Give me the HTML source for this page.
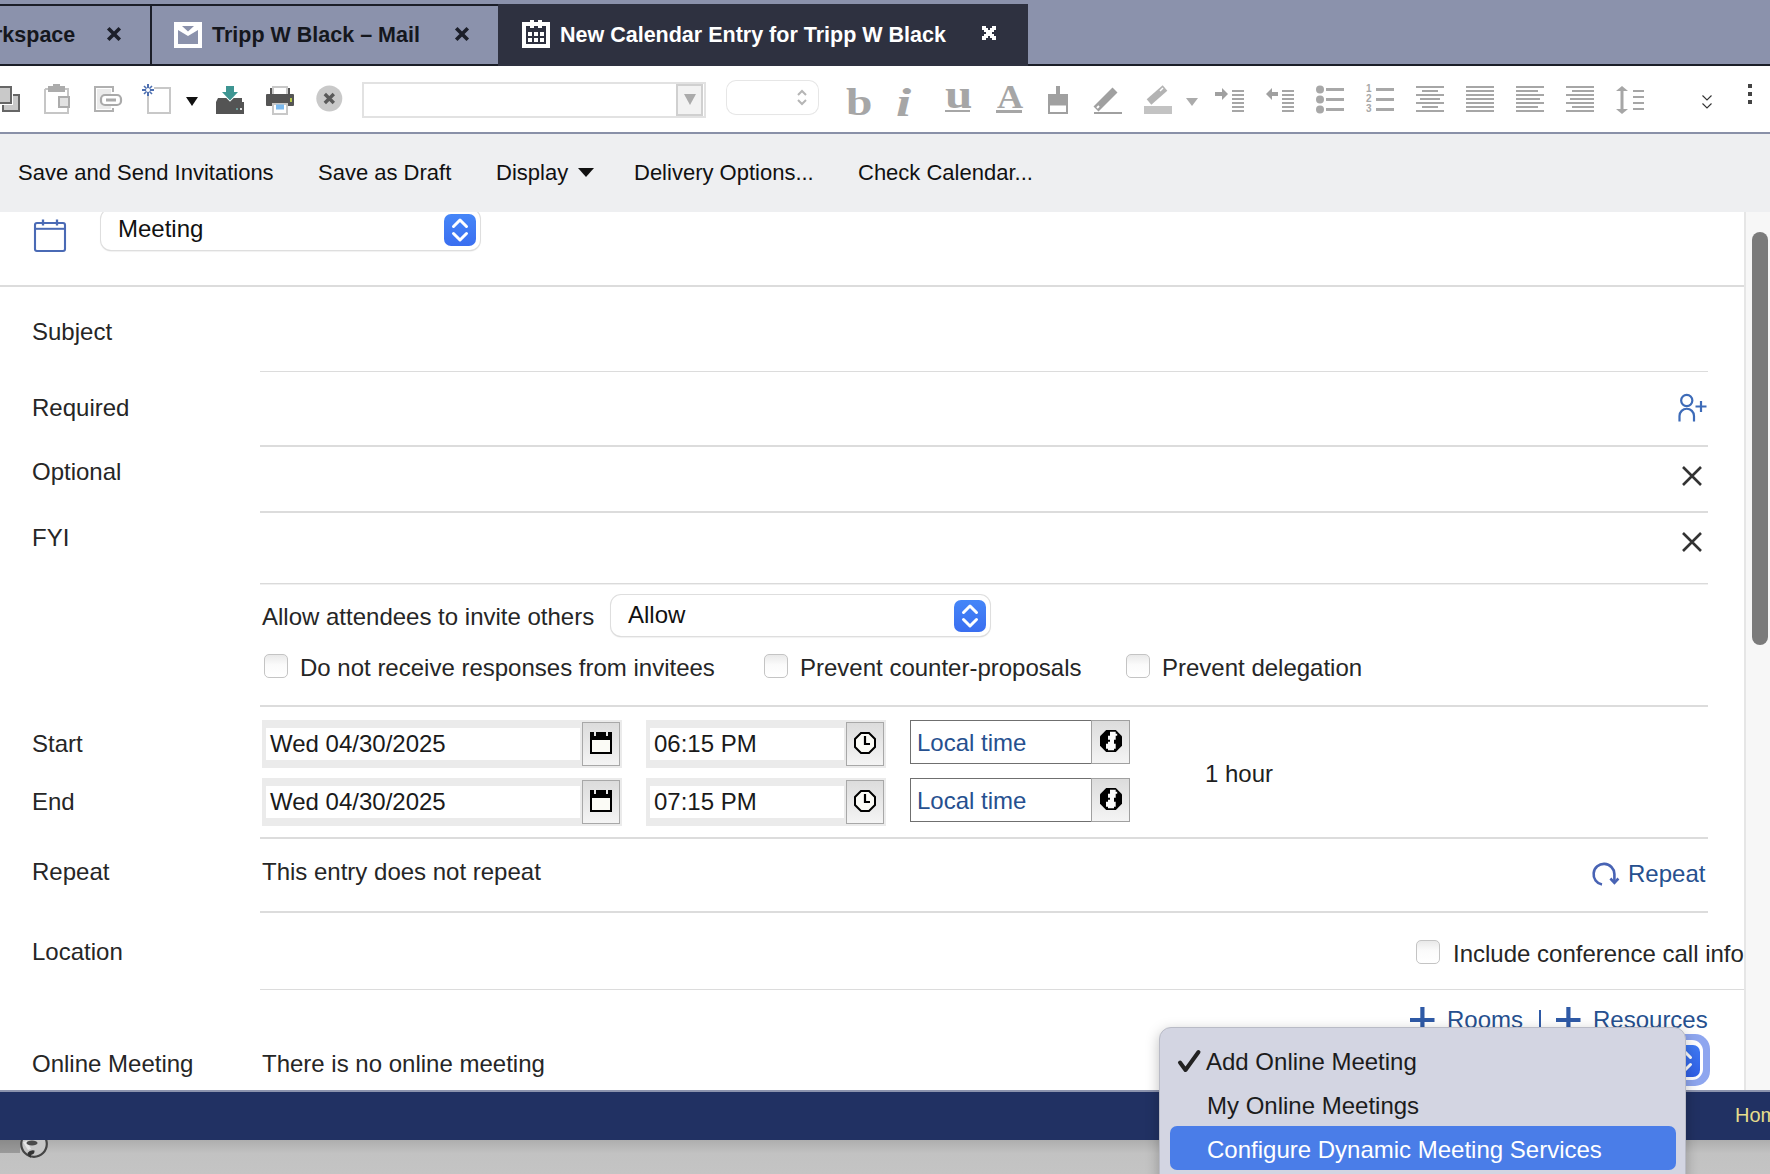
<!DOCTYPE html>
<html><head><meta charset="utf-8">
<style>
*{margin:0;padding:0;box-sizing:border-box}
html,body{width:1770px;height:1174px;overflow:hidden;background:#fff;font-family:"Liberation Sans",sans-serif;color:#222}
.a{position:absolute}
.t{position:absolute;white-space:nowrap;line-height:1}
svg.a{overflow:visible}

</style></head><body>
<div class="a" style="left:0px;top:0px;width:1770px;height:66px;background:#8b92ac"></div>
<div class="a" style="left:0px;top:4px;width:498px;height:2px;background:#1b1e28"></div>
<div class="a" style="left:0px;top:64px;width:1770px;height:2px;background:#1b1e28"></div>
<div class="a" style="left:150px;top:4px;width:2px;height:62px;background:#1b1e28"></div>
<div class="t" style="left:-6px;top:24.50px;font-size:21.5px;color:#15171d;font-weight:bold;">rkspace</div>
<div class="t" style="left:212px;top:24.50px;font-size:21.5px;color:#15171d;font-weight:bold;">Tripp W Black – Mail</div>
<div class="a" style="left:498px;top:4px;width:530px;height:62px;background:#2e3140"></div>
<div class="t" style="left:560px;top:24.50px;font-size:21.5px;color:#ffffff;font-weight:bold;">New Calendar Entry for Tripp W Black</div>
<div class="a" style="left:0px;top:66px;width:1770px;height:66px;background:#fff"></div>
<div class="a" style="left:0px;top:132px;width:1770px;height:2px;background:#8990a8"></div>
<svg class="a" style="left:108px;top:28px;" width="12" height="12" viewBox="0 0 12 12"><path d="M1.5 1.5 L10.5 10.5 M10.5 1.5 L1.5 10.5" stroke="#1c1f2a" stroke-width="3.6" stroke-linecap="square"/></svg>
<svg class="a" style="left:456px;top:28px;" width="12" height="12" viewBox="0 0 12 12"><path d="M1.5 1.5 L10.5 10.5 M10.5 1.5 L1.5 10.5" stroke="#1c1f2a" stroke-width="3.6" stroke-linecap="square"/></svg>
<svg class="a" style="left:982px;top:26px;" width="14" height="14" viewBox="0 0 14 14"><rect x="0" y="0" width="4" height="2" fill="#fff"/><rect x="10" y="0" width="4" height="2" fill="#fff"/><rect x="0" y="2" width="6" height="2" fill="#fff"/><rect x="8" y="2" width="6" height="2" fill="#fff"/><rect x="2" y="4" width="10" height="2" fill="#fff"/><rect x="4" y="6" width="6" height="2" fill="#fff"/><rect x="2" y="8" width="10" height="2" fill="#fff"/><rect x="0" y="10" width="6" height="2" fill="#fff"/><rect x="8" y="10" width="6" height="2" fill="#fff"/><rect x="0" y="12" width="4" height="2" fill="#fff"/><rect x="10" y="12" width="4" height="2" fill="#fff"/></svg>
<svg class="a" style="left:174px;top:22px;" width="28" height="26" viewBox="0 0 28 26"><rect x="0" y="0" width="28" height="26" fill="#fff"/><rect x="4" y="4" width="20" height="18" fill="#8b92ac"/><polygon points="4,4 8,4 14,9.5 20,4 24,4 24,8 14,14 4,8" fill="#fff"/></svg>
<svg class="a" style="left:522px;top:20px;" width="28" height="28" viewBox="0 0 28 28"><rect x="0" y="2" width="28" height="26" fill="#fff"/><rect x="4" y="6" width="20" height="18" fill="#2e3140"/><rect x="8" y="0" width="4" height="8" fill="#fff"/><rect x="16" y="0" width="4" height="8" fill="#fff"/><rect x="6" y="12" width="4" height="4" fill="#fff"/><rect x="6" y="18" width="4" height="4" fill="#fff"/><rect x="12" y="12" width="4" height="4" fill="#fff"/><rect x="12" y="18" width="4" height="4" fill="#fff"/><rect x="18" y="12" width="4" height="4" fill="#fff"/><rect x="18" y="18" width="4" height="4" fill="#fff"/></svg>
<svg class="a" style="left:-8px;top:86px;" width="30" height="28" viewBox="0 0 30 28"><rect x="11" y="9" width="16" height="16" fill="#c9c9c9" stroke="#666" stroke-width="2"/><rect x="1" y="1" width="18" height="16" fill="#fff" stroke="#fff" stroke-width="4"/><rect x="1" y="1" width="18" height="16" fill="#c9c9c9" stroke="#666" stroke-width="2"/></svg>
<svg class="a" style="left:44px;top:84px;" width="28" height="30" viewBox="0 0 28 30"><path d="M1 5 V29 H24 V24 M24 12 V5 H21 M1 5 H4" fill="none" stroke="#c6c6c6" stroke-width="2"/><rect x="4" y="2" width="17" height="6" fill="#acacac"/><rect x="9" y="0" width="7" height="3" fill="#acacac"/><rect x="15" y="13" width="10" height="10" fill="#e2e2e2" stroke="#acacac" stroke-width="2"/></svg>
<svg class="a" style="left:94px;top:86px;" width="30" height="28" viewBox="0 0 30 28"><path d="M19 6 V1 H1 V25 H19 V22" fill="none" stroke="#b0b0b0" stroke-width="2"/><rect x="3" y="3" width="14" height="20" fill="#ebebeb"/><rect x="7" y="9" width="20" height="10" rx="4" fill="#fff" stroke="#aaa" stroke-width="2.2"/><rect x="12" y="12.5" width="10" height="3" fill="#aaa"/></svg>
<svg class="a" style="left:140px;top:83px;" width="34" height="32" viewBox="0 0 34 32"><path d="M8 12 V30 H30 V5 H14" fill="none" stroke="#c8c8c8" stroke-width="2"/><g stroke="#4d6fb0" stroke-width="2"><path d="M8 1 V13 M2 7 H14"/><path d="M4 3 L12 11 M12 3 L4 11" stroke-width="1.6"/></g><circle cx="8" cy="7" r="2" fill="#fff"/></svg>
<svg class="a" style="left:186px;top:97px;" width="12" height="9" viewBox="0 0 12 9"><polygon points="0,0 12,0 6,9" fill="#111"/></svg>
<svg class="a" style="left:216px;top:86px;" width="28" height="28" viewBox="0 0 28 28"><rect x="10" y="0" width="8" height="7" fill="#3e9592"/><polygon points="6,6 22,6 14,14.5" fill="#3e9592"/><path d="M2 12 H10 L14 16 L18 12 H26 V28 H0 V16 Z" fill="#545454"/><path d="M0 16 H2 V12 H10 L14 16 L18 12 H26 V16 H28 V28 H0 Z" fill="#545454"/><rect x="20" y="22" width="2" height="2" fill="#6a9a96"/><rect x="24" y="22" width="2" height="2" fill="#ddd"/></svg>
<svg class="a" style="left:266px;top:86px;" width="28" height="28" viewBox="0 0 28 28"><rect x="7" y="1" width="14" height="10" fill="#fff" stroke="#c8c8c8" stroke-width="2"/><rect x="4" y="2" width="2" height="8" fill="#545454"/><rect x="22" y="2" width="2" height="8" fill="#545454"/><rect x="0" y="8" width="28" height="12" rx="1" fill="#545454"/><rect x="24" y="12" width="2" height="4" fill="#b5c64a"/><rect x="7" y="18" width="14" height="10" fill="#fff" stroke="#c8c8c8" stroke-width="2"/><rect x="10" y="18.5" width="8" height="5" fill="#7bbaf0"/></svg>
<svg class="a" style="left:316px;top:85px;" width="27" height="27" viewBox="0 0 27 27"><circle cx="13.3" cy="13.5" r="13" fill="#c9c9c9"/><path d="M8.8 9 L17.8 18 M17.8 9 L8.8 18" stroke="#5a5a5a" stroke-width="3.4"/></svg>
<div class="a" style="left:362px;top:82px;width:344px;height:36px;background:#fff;border:2px solid #e2e2e2"></div>
<div class="a" style="left:676px;top:84px;width:27px;height:32px;background:#f2f2f2;border:2px solid #d0d0d0;border-top-width:2px"></div>
<svg class="a" style="left:684px;top:94px;" width="12" height="11" viewBox="0 0 12 11"><polygon points="0,0 12,0 6,11" fill="#ababab"/></svg>
<div class="a" style="left:727px;top:81px;width:91px;height:33px;background:#fff;border-radius:9px;box-shadow:0 0 0 1px #e6e6e6,0 1px 1px rgba(0,0,0,.06)"></div>
<svg class="a" style="left:796px;top:89px;" width="12" height="17" viewBox="0 0 12 17"><path d="M2 6 L6 2 L10 6 M2 11 L6 15 L10 11" fill="none" stroke="#b5b5b5" stroke-width="2"/></svg>
<div class="t" style="left:846px;top:83px;font:bold 38px 'Liberation Serif';line-height:1;color:#a6a6a6;transform:scaleX(1.25);transform-origin:0 0">b</div>
<div class="t" style="left:896px;top:83px;font:bold italic 39px 'Liberation Serif';line-height:1;color:#a6a6a6;transform:scaleX(1.4);transform-origin:0 0">i</div>
<div class="t" style="left:945px;top:72.5px;font:bold 42px 'Liberation Serif';line-height:1;color:#a6a6a6;transform:scaleX(1.17);transform-origin:0 0">u</div>
<div class="a" style="left:945px;top:110px;width:25px;height:2px;background:#a6a6a6"></div>
<div class="t" style="left:996.5px;top:81.4px;font:bold 33px 'Liberation Serif';line-height:1;color:#a6a6a6;transform:scaleX(1.1);transform-origin:0 0">A</div>
<div class="a" style="left:996px;top:110px;width:26px;height:3px;background:#a6a6a6"></div>
<svg class="a" style="left:1048px;top:86px;" width="20" height="28" viewBox="0 0 20 28"><rect x="8" y="0" width="4" height="9" fill="#a0a0a0"/><rect x="0" y="8" width="20" height="20" fill="#a0a0a0"/><rect x="2" y="19.5" width="16" height="6.5" fill="#fff"/></svg>
<svg class="a" style="left:1093px;top:86px;" width="30" height="28" viewBox="0 0 30 28"><path d="M3 23 L22 4" stroke="#a0a0a0" stroke-width="7"/><path d="M4 22 L6 20" stroke="#fff" stroke-width="2"/><rect x="1" y="26" width="28" height="2" fill="#a0a0a0"/></svg>
<svg class="a" style="left:1144px;top:86px;" width="30" height="28" viewBox="0 0 30 28"><path d="M5 16 L21 2" stroke="#b3b3b3" stroke-width="7"/><path d="M16 5 L19 2" stroke="#fff" stroke-width="1.5"/><rect x="0" y="20" width="28" height="8" fill="#c3c3c3"/></svg>
<svg class="a" style="left:1186px;top:98px;" width="12" height="8" viewBox="0 0 12 8"><polygon points="0,0 12,0 6,8" fill="#ababab"/></svg>
<svg class="a" style="left:1215px;top:88px;" width="14" height="12" viewBox="0 0 14 12"><rect x="0" y="4" width="8" height="4" fill="#a0a0a0"/><polygon points="7,0 13,6 7,12" fill="#a0a0a0"/></svg>
<svg class="a" style="left:1232px;top:90px;" width="40" height="26" viewBox="0 0 40 26"><rect x="0" y="0" width="12" height="2" fill="#a6a6a6"/><rect x="0" y="4" width="12" height="2" fill="#a6a6a6"/><rect x="0" y="8" width="12" height="2" fill="#a6a6a6"/><rect x="0" y="12" width="12" height="2" fill="#a6a6a6"/><rect x="0" y="16" width="12" height="2" fill="#a6a6a6"/><rect x="0" y="20" width="12" height="2" fill="#a6a6a6"/></svg>
<svg class="a" style="left:1265px;top:88px;" width="14" height="12" viewBox="0 0 14 12"><rect x="5" y="4" width="8" height="4" fill="#a0a0a0"/><polygon points="7,0 1,6 7,12" fill="#a0a0a0"/></svg>
<svg class="a" style="left:1282px;top:90px;" width="40" height="26" viewBox="0 0 40 26"><rect x="0" y="0" width="12" height="2" fill="#a6a6a6"/><rect x="0" y="4" width="12" height="2" fill="#a6a6a6"/><rect x="0" y="8" width="12" height="2" fill="#a6a6a6"/><rect x="0" y="12" width="12" height="2" fill="#a6a6a6"/><rect x="0" y="16" width="12" height="2" fill="#a6a6a6"/><rect x="0" y="20" width="12" height="2" fill="#a6a6a6"/></svg>
<svg class="a" style="left:1316px;top:85px;" width="30" height="30" viewBox="0 0 30 30"><circle cx="4" cy="4.5" r="4" fill="#a8a8a8"/><rect x="10" y="3" width="18" height="3" fill="#a8a8a8"/><circle cx="4" cy="14.5" r="4" fill="#a8a8a8"/><rect x="10" y="13" width="18" height="3" fill="#a8a8a8"/><circle cx="4" cy="24.5" r="4" fill="#a8a8a8"/><rect x="10" y="23" width="18" height="3" fill="#a8a8a8"/></svg>
<svg class="a" style="left:1366px;top:83px;" width="30" height="32" viewBox="0 0 30 32"><text x="0" y="9" font-size="10" font-family="Liberation Sans" fill="#a8a8a8" font-weight="bold">1</text><text x="0" y="19" font-size="10" font-family="Liberation Sans" fill="#a8a8a8" font-weight="bold">2</text><text x="0" y="29" font-size="10" font-family="Liberation Sans" fill="#a8a8a8" font-weight="bold">3</text><rect x="10" y="5" width="18" height="3" fill="#a8a8a8"/><rect x="10" y="15" width="18" height="3" fill="#a8a8a8"/><rect x="10" y="25" width="18" height="3" fill="#a8a8a8"/></svg>
<svg class="a" style="left:1416px;top:86px;" width="40" height="30" viewBox="0 0 40 30"><rect x="0" y="0" width="28" height="2" fill="#a6a6a6"/><rect x="6" y="4" width="16" height="2" fill="#a6a6a6"/><rect x="0" y="8" width="28" height="2" fill="#a6a6a6"/><rect x="4" y="12" width="20" height="2" fill="#a6a6a6"/><rect x="0" y="16" width="28" height="2" fill="#a6a6a6"/><rect x="6" y="20" width="16" height="2" fill="#a6a6a6"/><rect x="0" y="24" width="28" height="2" fill="#a6a6a6"/></svg>
<svg class="a" style="left:1466px;top:86px;" width="40" height="30" viewBox="0 0 40 30"><rect x="0" y="0" width="28" height="2" fill="#a6a6a6"/><rect x="0" y="4" width="28" height="2" fill="#a6a6a6"/><rect x="0" y="8" width="28" height="2" fill="#a6a6a6"/><rect x="0" y="12" width="28" height="2" fill="#a6a6a6"/><rect x="0" y="16" width="28" height="2" fill="#a6a6a6"/><rect x="0" y="20" width="28" height="2" fill="#a6a6a6"/><rect x="0" y="24" width="28" height="2" fill="#a6a6a6"/></svg>
<svg class="a" style="left:1516px;top:86px;" width="40" height="30" viewBox="0 0 40 30"><rect x="0" y="0" width="28" height="2" fill="#a6a6a6"/><rect x="0" y="4" width="22" height="2" fill="#a6a6a6"/><rect x="0" y="8" width="28" height="2" fill="#a6a6a6"/><rect x="0" y="12" width="24" height="2" fill="#a6a6a6"/><rect x="0" y="16" width="28" height="2" fill="#a6a6a6"/><rect x="0" y="20" width="22" height="2" fill="#a6a6a6"/><rect x="0" y="24" width="28" height="2" fill="#a6a6a6"/></svg>
<svg class="a" style="left:1566px;top:86px;" width="40" height="30" viewBox="0 0 40 30"><rect x="0" y="0" width="28" height="2" fill="#a6a6a6"/><rect x="6" y="4" width="22" height="2" fill="#a6a6a6"/><rect x="0" y="8" width="28" height="2" fill="#a6a6a6"/><rect x="4" y="12" width="24" height="2" fill="#a6a6a6"/><rect x="0" y="16" width="28" height="2" fill="#a6a6a6"/><rect x="6" y="20" width="22" height="2" fill="#a6a6a6"/><rect x="0" y="24" width="28" height="2" fill="#a6a6a6"/></svg>
<svg class="a" style="left:1615px;top:86px;" width="30" height="28" viewBox="0 0 30 28"><rect x="5.5" y="3" width="3" height="22" fill="#a6a6a6"/><polygon points="1,5 7,0 13,5" fill="#a6a6a6"/><polygon points="1,23 7,28 13,23" fill="#a6a6a6"/><rect x="18" y="4" width="11" height="2" fill="#a6a6a6"/><rect x="18" y="10" width="11" height="2" fill="#a6a6a6"/><rect x="18" y="16" width="11" height="2" fill="#a6a6a6"/><rect x="18" y="22" width="11" height="2" fill="#a6a6a6"/></svg>
<svg class="a" style="left:1702px;top:95px;" width="11" height="15" viewBox="0 0 11 15"><path d="M0.5 0.5 L5 5 L9.5 0.5 M0.5 8.5 L5 13 L9.5 8.5" fill="none" stroke="#333" stroke-width="1.1"/></svg>
<svg class="a" style="left:1748px;top:84px;" width="4" height="20" viewBox="0 0 4 20"><rect x="0" y="0" width="4" height="4" fill="#444"/><rect x="0" y="8" width="4" height="4" fill="#444"/><rect x="0" y="16" width="4" height="4" fill="#444"/></svg>
<div class="a" style="left:0px;top:134px;width:1770px;height:78px;background:#eeeff1;z-index:3"></div>
<div class="a" style="left:0;top:134px;width:1770px;height:78px;z-index:4">
<div class="t" style="left:18px;top:27.98px;font-size:22px;color:#111;">Save and Send Invitations</div>
<div class="t" style="left:318px;top:27.98px;font-size:22px;color:#111;">Save as Draft</div>
<div class="t" style="left:496px;top:27.98px;font-size:22px;color:#111;">Display</div>
<div class="t" style="left:634px;top:27.98px;font-size:22px;color:#111;">Delivery Options...</div>
<div class="t" style="left:858px;top:27.98px;font-size:22px;color:#111;">Check Calendar...</div>
</div>
<div class="a" style="left:101px;top:209px;width:379px;height:41px;border-radius:10px;background:#fff;box-shadow:0 0 0 1px #dedede,0 1px 1.5px rgba(0,0,0,.28)"></div>
<div class="a" style="left:444px;top:214px;width:32px;height:32px;border-radius:7px;background:linear-gradient(#4586f8,#3a6ef0)"></div>
<svg class="a" style="left:444px;top:214px;" width="32" height="32" viewBox="0 0 32 32"><path d="M9.5 12.5 L16 6 L22.5 12.5 M9.5 19.5 L16 26 L22.5 19.5" fill="none" stroke="#fff" stroke-width="3" stroke-linecap="round" stroke-linejoin="round"/></svg>
<div class="t" style="left:118px;top:217.08px;font-size:24px;color:#111;">Meeting</div>
<div class="a" style="left:0px;top:285px;width:1744px;height:2px;background:#dcdcdc"></div>
<div class="t" style="left:32px;top:319.68px;font-size:24px;color:#262626;">Subject</div>
<div class="a" style="left:260px;top:371px;width:1448px;height:1px;background:#dcdcdc"></div>
<div class="t" style="left:32px;top:395.68px;font-size:24px;color:#262626;">Required</div>
<div class="a" style="left:260px;top:445px;width:1448px;height:2px;background:#dcdcdc"></div>
<div class="t" style="left:32px;top:459.98px;font-size:24px;color:#262626;">Optional</div>
<div class="a" style="left:260px;top:511px;width:1448px;height:2px;background:#dcdcdc"></div>
<div class="t" style="left:32px;top:525.98px;font-size:24px;color:#262626;">FYI</div>
<div class="a" style="left:260px;top:583px;width:1448px;height:1px;background:#dadada"></div>
<div class="a" style="left:260px;top:584px;width:1448px;height:1px;background:#f0f0f0"></div>
<div class="t" style="left:262px;top:604.68px;font-size:24px;color:#262626;">Allow attendees to invite others</div>
<div class="a" style="left:611px;top:595px;width:379px;height:41px;border-radius:10px;background:#fff;box-shadow:0 0 0 1px #dedede,0 1px 1.5px rgba(0,0,0,.28)"></div>
<div class="a" style="left:954px;top:600px;width:32px;height:32px;border-radius:7px;background:linear-gradient(#4586f8,#3a6ef0)"></div>
<svg class="a" style="left:954px;top:600px;" width="32" height="32" viewBox="0 0 32 32"><path d="M9.5 12.5 L16 6 L22.5 12.5 M9.5 19.5 L16 26 L22.5 19.5" fill="none" stroke="#fff" stroke-width="3" stroke-linecap="round" stroke-linejoin="round"/></svg>
<div class="t" style="left:628px;top:603.38px;font-size:24px;color:#111;">Allow</div>
<div class="a" style="left:264px;top:654px;width:24px;height:24px;border:1px solid #c4c4c4;border-radius:5px;background:linear-gradient(#e9e9e9,#fbfbfb 45%,#fff)"></div>
<div class="t" style="left:300px;top:656.08px;font-size:24px;color:#262626;">Do not receive responses from invitees</div>
<div class="a" style="left:764px;top:654px;width:24px;height:24px;border:1px solid #c4c4c4;border-radius:5px;background:linear-gradient(#e9e9e9,#fbfbfb 45%,#fff)"></div>
<div class="t" style="left:800px;top:656.08px;font-size:24px;color:#262626;">Prevent counter-proposals</div>
<div class="a" style="left:1126px;top:654px;width:24px;height:24px;border:1px solid #c4c4c4;border-radius:5px;background:linear-gradient(#e9e9e9,#fbfbfb 45%,#fff)"></div>
<div class="t" style="left:1162px;top:656.08px;font-size:24px;color:#262626;">Prevent delegation</div>
<div class="a" style="left:260px;top:705px;width:1448px;height:2px;background:#dcdcdc"></div>
<div class="t" style="left:32px;top:732.18px;font-size:24px;color:#262626;">Start</div>
<div class="t" style="left:32px;top:789.98px;font-size:24px;color:#262626;">End</div>
<div class="a" style="left:262px;top:720px;width:360px;height:48px;background:#ebebeb"></div>
<div class="a" style="left:266px;top:728px;width:314px;height:32px;background:#fff"></div>
<div class="a" style="left:582px;top:722px;width:38px;height:44px;border:1.5px solid #a8a8a8;background:linear-gradient(#dcdcdc,#f4f4f4)"></div>
<div class="t" style="left:270px;top:732.28px;font-size:24px;color:#1a1a1a;">Wed 04/30/2025</div>
<div class="a" style="left:646px;top:720px;width:240px;height:48px;background:#ebebeb"></div>
<div class="a" style="left:650px;top:728px;width:194px;height:32px;background:#fff"></div>
<div class="a" style="left:846px;top:722px;width:38px;height:44px;border:1.5px solid #a8a8a8;background:linear-gradient(#dcdcdc,#f4f4f4)"></div>
<div class="t" style="left:654px;top:732.28px;font-size:24px;color:#1a1a1a;">06:15 PM</div>
<div class="a" style="left:910px;top:720px;width:182px;height:44px;border:1px solid #6f6f6f;background:#fff"></div>
<div class="a" style="left:1091px;top:720px;width:39px;height:44px;border:1.5px solid #a0a0a0;background:linear-gradient(#dcdcdc,#f4f4f4)"></div>
<div class="t" style="left:917px;top:730.58px;font-size:24px;color:#26508f;">Local time</div>
<div class="a" style="left:262px;top:778px;width:360px;height:48px;background:#ebebeb"></div>
<div class="a" style="left:266px;top:786px;width:314px;height:32px;background:#fff"></div>
<div class="a" style="left:582px;top:780px;width:38px;height:44px;border:1.5px solid #a8a8a8;background:linear-gradient(#dcdcdc,#f4f4f4)"></div>
<div class="t" style="left:270px;top:790.28px;font-size:24px;color:#1a1a1a;">Wed 04/30/2025</div>
<div class="a" style="left:646px;top:778px;width:240px;height:48px;background:#ebebeb"></div>
<div class="a" style="left:650px;top:786px;width:194px;height:32px;background:#fff"></div>
<div class="a" style="left:846px;top:780px;width:38px;height:44px;border:1.5px solid #a8a8a8;background:linear-gradient(#dcdcdc,#f4f4f4)"></div>
<div class="t" style="left:654px;top:790.28px;font-size:24px;color:#1a1a1a;">07:15 PM</div>
<div class="a" style="left:910px;top:778px;width:182px;height:44px;border:1px solid #6f6f6f;background:#fff"></div>
<div class="a" style="left:1091px;top:778px;width:39px;height:44px;border:1.5px solid #a0a0a0;background:linear-gradient(#dcdcdc,#f4f4f4)"></div>
<div class="t" style="left:917px;top:788.58px;font-size:24px;color:#26508f;">Local time</div>
<div class="t" style="left:1205px;top:761.68px;font-size:24px;color:#1f1f1f;">1 hour</div>
<div class="a" style="left:260px;top:837px;width:1448px;height:2px;background:#dcdcdc"></div>
<div class="t" style="left:32px;top:859.98px;font-size:24px;color:#262626;">Repeat</div>
<div class="t" style="left:262px;top:859.98px;font-size:24px;color:#262626;">This entry does not repeat</div>
<div class="t" style="left:1628px;top:861.68px;font-size:24px;color:#26508f;">Repeat</div>
<div class="a" style="left:260px;top:911px;width:1448px;height:2px;background:#dcdcdc"></div>
<div class="t" style="left:32px;top:939.68px;font-size:24px;color:#262626;">Location</div>
<div class="a" style="left:1416px;top:940px;width:24px;height:24px;border:1px solid #c4c4c4;border-radius:5px;background:linear-gradient(#e9e9e9,#fbfbfb 45%,#fff)"></div>
<div class="t" style="left:1453px;top:941.78px;font-size:24px;color:#262626;">Include conference call info</div>
<div class="a" style="left:260px;top:989px;width:1484px;height:1px;background:#dcdcdc"></div>
<div class="t" style="left:1447px;top:1007.68px;font-size:24px;color:#26508f;">Rooms</div>
<div class="t" style="left:1593px;top:1007.68px;font-size:24px;color:#26508f;">Resources</div>
<div class="t" style="left:32px;top:1051.68px;font-size:24px;color:#262626;">Online Meeting</div>
<div class="t" style="left:262px;top:1051.68px;font-size:24px;color:#262626;">There is no online meeting</div>
<svg class="a" style="left:578px;top:168px;z-index:6" width="16" height="9" viewBox="0 0 16 9"><polygon points="0,0 16,0 8,9" fill="#111"/></svg>
<svg class="a" style="left:28px;top:214px;" width="44" height="44" viewBox="0 0 44 44"><rect x="7" y="9" width="30" height="28" rx="2" fill="none" stroke="#4a6ab5" stroke-width="2.1"/><path d="M7 14.8 H37" stroke="#4a6ab5" stroke-width="2"/><path d="M15 5.6 V11.6 M29 5.6 V11.6" stroke="#4a6ab5" stroke-width="2.3"/></svg>
<svg class="a" style="left:590px;top:732px;" width="22" height="22" viewBox="0 0 22 22"><rect x="0" y="0" width="22" height="22" fill="#000"/><rect x="2" y="8" width="18" height="12" fill="#fbfbf6"/><rect x="4" y="0" width="2" height="4" fill="#e6e6e6"/><rect x="16" y="0" width="2" height="4" fill="#e6e6e6"/></svg>
<svg class="a" style="left:854px;top:732px;" width="22" height="22" viewBox="0 0 22 22"><polygon points="7,1 15,1 21,7 21,15 15,21 7,21 1,15 1,7" fill="#fbfbf6" stroke="#000" stroke-width="2"/><path d="M11 4 V12 H16" fill="none" stroke="#000" stroke-width="2.2"/></svg>
<svg class="a" style="left:1100px;top:730px;" width="22" height="22" viewBox="0 0 22 22"><polygon points="6.2,0 15.8,0 22,6.2 22,15.8 15.8,22 6.2,22 0,15.8 0,6.2" fill="#000"/><path d="M10 1.8 H15.7 V3.7 H17.2 V5.7 H15.7 V9.7 H14 V13.7 H15.7 V18.7 H14 V20.2 H8 V18.7 H6 V13.7 H8 V11.7 H10 V9.7 H8 V5.7 H10 Z" fill="#fafafa"/></svg>
<svg class="a" style="left:590px;top:790px;" width="22" height="22" viewBox="0 0 22 22"><rect x="0" y="0" width="22" height="22" fill="#000"/><rect x="2" y="8" width="18" height="12" fill="#fbfbf6"/><rect x="4" y="0" width="2" height="4" fill="#e6e6e6"/><rect x="16" y="0" width="2" height="4" fill="#e6e6e6"/></svg>
<svg class="a" style="left:854px;top:790px;" width="22" height="22" viewBox="0 0 22 22"><polygon points="7,1 15,1 21,7 21,15 15,21 7,21 1,15 1,7" fill="#fbfbf6" stroke="#000" stroke-width="2"/><path d="M11 4 V12 H16" fill="none" stroke="#000" stroke-width="2.2"/></svg>
<svg class="a" style="left:1100px;top:788px;" width="22" height="22" viewBox="0 0 22 22"><polygon points="6.2,0 15.8,0 22,6.2 22,15.8 15.8,22 6.2,22 0,15.8 0,6.2" fill="#000"/><path d="M10 1.8 H15.7 V3.7 H17.2 V5.7 H15.7 V9.7 H14 V13.7 H15.7 V18.7 H14 V20.2 H8 V18.7 H6 V13.7 H8 V11.7 H10 V9.7 H8 V5.7 H10 Z" fill="#fafafa"/></svg>
<svg class="a" style="left:1676px;top:392px;" width="32" height="32" viewBox="0 0 32 32"><circle cx="10.75" cy="8.5" r="5.6" fill="none" stroke="#3d6bb8" stroke-width="2.2"/><path d="M3.5 29.5 V24 A7.25 7.25 0 0 1 18 24 V29.5" fill="none" stroke="#3d6bb8" stroke-width="2.2"/><path d="M19.5 14.5 H30.5 M25 9 V20" stroke="#3d6bb8" stroke-width="2.2"/></svg>
<svg class="a" style="left:1682px;top:466px;" width="20" height="20" viewBox="0 0 20 20"><path d="M1 1 L19 19 M19 1 L1 19" stroke="#333" stroke-width="2.6"/></svg>
<svg class="a" style="left:1682px;top:532px;" width="20" height="20" viewBox="0 0 20 20"><path d="M1 1 L19 19 M19 1 L1 19" stroke="#333" stroke-width="2.6"/></svg>
<svg class="a" style="left:1584px;top:852px;" width="46" height="44" viewBox="0 0 46 44"><path d="M18 32.5 A10.4 10.4 0 1 1 30.4 22 L30.4 29" fill="none" stroke="#4863b4" stroke-width="2.6"/><path d="M26.4 26.5 L30.4 30.8 L34.4 26.5" fill="none" stroke="#4863b4" stroke-width="2.6"/></svg>
<svg class="a" style="left:1409.5px;top:1007px;" width="25" height="21" viewBox="0 0 25 21"><rect x="0" y="11" width="24.5" height="4" fill="#2f5aa6"/><rect x="10.3" y="0" width="4.2" height="21" fill="#2f5aa6"/></svg>
<svg class="a" style="left:1556px;top:1007px;" width="25" height="21" viewBox="0 0 25 21"><rect x="0" y="11" width="24.5" height="4" fill="#2f5aa6"/><rect x="10.3" y="0" width="4.2" height="21" fill="#2f5aa6"/></svg>
<div class="a" style="left:1539px;top:1010px;width:2px;height:18px;background:#2f5aa6"></div>
<div class="a" style="left:1744px;top:212px;width:26px;height:878px;background:#f7f7f7;border-left:2px solid #e6e6e6"></div>
<div class="a" style="left:1752px;top:232px;width:16px;height:413px;border-radius:8px;background:#7b7b7b"></div>
<div class="a" style="left:0px;top:1090px;width:1770px;height:2px;background:#8c93ad"></div>
<div class="a" style="left:0px;top:1092px;width:1770px;height:48px;background:#213163"></div>
<div class="a" style="left:0px;top:1140px;width:1770px;height:34px;background:linear-gradient(#aeaeae,#c2c2c2 40%,#c4c4c4)"></div>
<div class="a" style="left:0px;top:1140px;width:20px;height:13px;background:linear-gradient(#8a8a8a,#9a9a9a)"></div>
<svg class="a" style="left:18px;top:1128px;" width="32" height="32" viewBox="0 0 32 32"><defs><clipPath id="gc"><rect x="0" y="12" width="32" height="20"/></clipPath></defs><g clip-path="url(#gc)"><circle cx="16" cy="16" r="12.8" fill="#c6c6c6" stroke="#454545" stroke-width="2.2"/><path d="M5 14 L10 22 L13 21 L9 13 Z" fill="#e6e6e6"/><ellipse cx="14" cy="15" rx="5.5" ry="2.6" fill="#4a4a4a"/><path d="M9.5 25 Q12 21.5 16.5 22.5 Q17 26 13 27 L12.5 30 Q10 28.5 9.5 25 Z" fill="#333"/></g></svg>
<div class="t" style="left:1735px;top:1105.07px;font-size:20px;color:#e6dc8c;">Hom</div>
<div class="a" style="left:1300px;top:1034px;width:410px;height:52px;border-radius:15px;background:#8ea6ef"></div>
<div class="a" style="left:1304px;top:1040px;width:399px;height:40px;border-radius:11px;background:#fff"></div>
<div class="a" style="left:1668px;top:1045px;width:32px;height:32px;border-radius:7px;background:linear-gradient(#3f7af4,#2f5fe6)"></div>
<svg class="a" style="left:1668px;top:1045px;" width="32" height="32" viewBox="0 0 32 32"><path d="M9.5 12.5 L16 6 L22.5 12.5 M9.5 19.5 L16 26 L22.5 19.5" fill="none" stroke="#fff" stroke-width="3" stroke-linecap="round" stroke-linejoin="round"/></svg>
<div class="a" style="left:1159px;top:1027px;width:527px;height:160px;border-radius:12px;background:#d3d5e2;border:1px solid #b9bbc6;box-shadow:0 4px 14px rgba(0,0,0,.25)"></div>
<div class="a" style="left:1170px;top:1126px;width:506px;height:44px;border-radius:7px;background:#4a7de8"></div>
<div class="t" style="left:1206px;top:1050.28px;font-size:24px;color:#1c1c1c;">Add Online Meeting</div>
<svg class="a" style="left:1176px;top:1049px;" width="26" height="25" viewBox="0 0 26 25"><path d="M4 13.5 L9.5 21 L22.5 3" fill="none" stroke="#222" stroke-width="4" stroke-linecap="round" stroke-linejoin="round"/></svg>
<div class="t" style="left:1207px;top:1093.98px;font-size:24px;color:#1c1c1c;">My Online Meetings</div>
<div class="t" style="left:1207px;top:1137.58px;font-size:24px;color:#fff;">Configure Dynamic Meeting Services</div>
</body></html>
